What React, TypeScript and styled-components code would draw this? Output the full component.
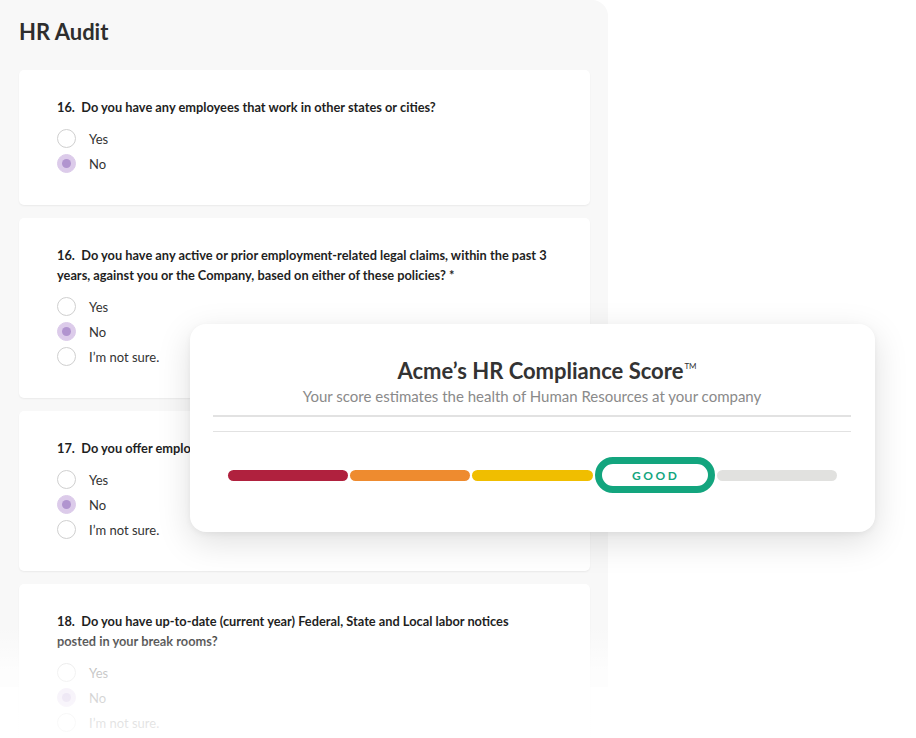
import React from "react";
import styled, { createGlobalStyle } from "styled-components";

const GlobalStyle = createGlobalStyle`
    html, body {
        margin: 0;
        padding: 0;
        background: #ffffff;
    }
    body {
        font-family: "Lato", "Noto Sans", sans-serif;
        color: #222;
    }
`;

interface Question {
    num: number;
    text: string;
    options: string[];
    selected: number;
}

const questions: Question[] = [
    {
        num: 16,
        text: "Do you have any employees that work in other states or cities?",
        options: ["Yes", "No"],
        selected: 1,
    },
    {
        num: 16,
        text: "Do you have any active or prior employment-related legal claims, within the past 3 years, against you or the Company, based on either of these policies? *",
        options: ["Yes", "No", "I’m not sure."],
        selected: 1,
    },
    {
        num: 17,
        text: "Do you offer employees health insurance or retirement benefits?",
        options: ["Yes", "No", "I’m not sure."],
        selected: 1,
    },
    {
        num: 18,
        text: "Do you have up-to-date (current year) Federal, State and Local labor notices\nposted in your break rooms?",
        options: ["Yes", "No", "I’m not sure."],
        selected: 1,
    },
];

const Page = styled.div`
    position: relative;
    width: 916px;
    height: 738px;
    overflow: hidden;
`;

const Panel = styled.div`
    width: 608px;
    height: 687px;
    box-sizing: border-box;
    padding: 17px 18px 0 19px;
    background: #f8f8f8;
    border-top-right-radius: 16px;
`;

const Title = styled.h1`
    margin: 0 0 23px;
    font-size: 22px;
    line-height: 30px;
    font-weight: 700;
    color: #2e2e2e;
`;

const CardList = styled.div`
    display: flex;
    flex-direction: column;
    gap: 13px;
`;

const Card = styled.div`
    background: #ffffff;
    border-radius: 5px;
    box-shadow: 0 1px 2px rgba(0, 0, 0, 0.06);
    padding: 27px 38px 29px 38px;
`;

const QuestionText = styled.div`
    font-size: 12.8px;
    line-height: 20px;
    font-weight: 700;
    color: #1f1f1f;
    margin-bottom: 9px;
    white-space: pre-line;
`;

const Option = styled.label`
    display: flex;
    align-items: center;
    height: 25px;
    font-size: 13px;
    color: #333;
`;

const Radio = styled.span<{ $checked: boolean }>`
    box-sizing: border-box;
    flex: none;
    width: 19px;
    height: 19px;
    border-radius: 50%;
    margin-right: 13px;
    display: flex;
    align-items: center;
    justify-content: center;
    background: ${(p) => (p.$checked ? "#dccbea" : "#ffffff")};
    border: 1px solid ${(p) => (p.$checked ? "#dccbea" : "#cfcfcf")};

    &::after {
        content: "";
        display: ${(p) => (p.$checked ? "block" : "none")};
        width: 9px;
        height: 9px;
        border-radius: 50%;
        background: #b194cf;
    }
`;

const Fade = styled.div`
    position: absolute;
    left: 0;
    right: 0;
    bottom: 0;
    height: 112px;
    background: linear-gradient(to bottom, rgba(255, 255, 255, 0) 0%, rgba(255, 255, 255, 0.72) 40%, rgba(255, 255, 255, 0.9) 100%);
    pointer-events: none;
`;

const ScoreCard = styled.div`
    position: absolute;
    left: 190px;
    top: 324px;
    width: 685px;
    box-sizing: border-box;
    padding: 29px 24px 39px 23px;
    background: #ffffff;
    border-radius: 16px;
    box-shadow: 0 10px 34px rgba(0, 0, 0, 0.13), 0 2px 6px rgba(0, 0, 0, 0.05);
`;

const ScoreTitle = styled.div`
    text-align: center;
    padding-left: 30px;
    font-size: 22px;
    line-height: 26px;
    font-weight: 700;
    color: #333;

    & sup {
        font-size: 8px;
        font-weight: 400;
        vertical-align: 10px;
        margin-left: 1px;
    }
`;

const ScoreSub = styled.div`
    margin-top: 2px;
    text-align: center;
    font-size: 15px;
    line-height: 20px;
    color: #8a8a8a;
`;

const Rule = styled.div<{ $thick?: boolean }>`
    height: ${(p) => (p.$thick ? "2px" : "1px")};
    background: #e2e2e2;
`;

const Rules = styled.div`
    margin-top: 9px;
    display: flex;
    flex-direction: column;
    gap: 14px;
`;

const Meter = styled.div`
    margin: 25px 14px 0 15px;
    display: grid;
    grid-template-columns: repeat(5, 1fr);
    align-items: center;
    gap: 2px;
`;

const Segment = styled.div<{ $color: string }>`
    height: 11px;
    border-radius: 6px;
    background: ${(p) => p.$color};
`;

const Badge = styled.div`
    box-sizing: border-box;
    height: 36px;
    border: 7px solid #13a57e;
    border-radius: 18px;
    display: flex;
    align-items: center;
    justify-content: center;
    background: #ffffff;
    font-size: 12px;
    font-weight: 700;
    letter-spacing: 2.5px;
    padding-left: 2px;
    color: #13a57e;
`;

const App: React.FC = () => {
    return (
        <Page>
            <GlobalStyle />
            <Panel>
                <Title>HR Audit</Title>
                <CardList>
                    {questions.map((q, i) => (
                        <Card key={i}>
                            <QuestionText>{`${q.num}.\u2002${q.text}`}</QuestionText>
                            {q.options.map((o, j) => (
                                <Option key={o}>
                                    <Radio $checked={j === q.selected} />
                                    {o}
                                </Option>
                            ))}
                        </Card>
                    ))}
                </CardList>
            </Panel>
            <Fade />
            <ScoreCard>
                <ScoreTitle>
                    Acme’s HR Compliance Score<sup>TM</sup>
                </ScoreTitle>
                <ScoreSub>Your score estimates the health of Human Resources at your company</ScoreSub>
                <Rules>
                    <Rule $thick />
                    <Rule />
                </Rules>
                <Meter>
                    <Segment $color="#b0213e" />
                    <Segment $color="#ee8b2f" />
                    <Segment $color="#f0be00" />
                    <Badge>GOOD</Badge>
                    <Segment $color="#e1e1df" />
                </Meter>
            </ScoreCard>
        </Page>
    );
};

export default App;
